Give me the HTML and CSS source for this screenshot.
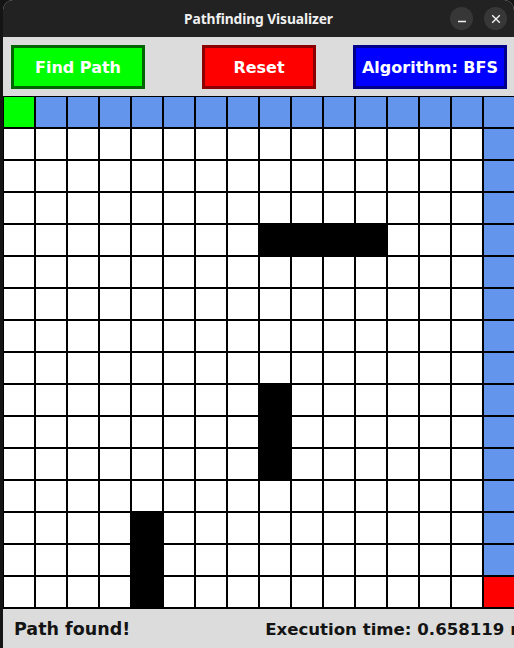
FILE: index.html
```html
<!DOCTYPE html>
<html>
<head>
<meta charset="utf-8">
<title>Pathfinding Visualizer</title>
<link rel="stylesheet" href="styles.css">
</head>
<body>
<div class="window">
  <header class="titlebar">
    <span class="title">Pathfinding Visualizer</span>
    <div class="controls">
      <span class="ctl"><svg width="10" height="10" viewBox="0 0 10 10"><path d="M1 7.5h8" stroke="#f2f2f2" stroke-width="1.4"/></svg></span>
      <span class="ctl"><svg width="10" height="10" viewBox="0 0 10 10"><path d="M1.2 1.2l7.6 7.6M8.8 1.2l-7.6 7.6" stroke="#f2f2f2" stroke-width="1.4"/></svg></span>
    </div>
  </header>
  <div class="panel">
    <button class="btn btn-find">Find Path</button>
    <button class="btn btn-reset">Reset</button>
    <button class="btn btn-algo">Algorithm: BFS</button>
  </div>
  <div class="grid">
    <div class="c s"></div><div class="c v"></div><div class="c v"></div><div class="c v"></div><div class="c v"></div><div class="c v"></div><div class="c v"></div><div class="c v"></div><div class="c v"></div><div class="c v"></div><div class="c v"></div><div class="c v"></div><div class="c v"></div><div class="c v"></div><div class="c v"></div><div class="c v"></div>
    <div class="c"></div><div class="c"></div><div class="c"></div><div class="c"></div><div class="c"></div><div class="c"></div><div class="c"></div><div class="c"></div><div class="c"></div><div class="c"></div><div class="c"></div><div class="c"></div><div class="c"></div><div class="c"></div><div class="c"></div><div class="c v"></div>
    <div class="c"></div><div class="c"></div><div class="c"></div><div class="c"></div><div class="c"></div><div class="c"></div><div class="c"></div><div class="c"></div><div class="c"></div><div class="c"></div><div class="c"></div><div class="c"></div><div class="c"></div><div class="c"></div><div class="c"></div><div class="c v"></div>
    <div class="c"></div><div class="c"></div><div class="c"></div><div class="c"></div><div class="c"></div><div class="c"></div><div class="c"></div><div class="c"></div><div class="c"></div><div class="c"></div><div class="c"></div><div class="c"></div><div class="c"></div><div class="c"></div><div class="c"></div><div class="c v"></div>
    <div class="c"></div><div class="c"></div><div class="c"></div><div class="c"></div><div class="c"></div><div class="c"></div><div class="c"></div><div class="c"></div><div class="c w"></div><div class="c w"></div><div class="c w"></div><div class="c w"></div><div class="c"></div><div class="c"></div><div class="c"></div><div class="c v"></div>
    <div class="c"></div><div class="c"></div><div class="c"></div><div class="c"></div><div class="c"></div><div class="c"></div><div class="c"></div><div class="c"></div><div class="c"></div><div class="c"></div><div class="c"></div><div class="c"></div><div class="c"></div><div class="c"></div><div class="c"></div><div class="c v"></div>
    <div class="c"></div><div class="c"></div><div class="c"></div><div class="c"></div><div class="c"></div><div class="c"></div><div class="c"></div><div class="c"></div><div class="c"></div><div class="c"></div><div class="c"></div><div class="c"></div><div class="c"></div><div class="c"></div><div class="c"></div><div class="c v"></div>
    <div class="c"></div><div class="c"></div><div class="c"></div><div class="c"></div><div class="c"></div><div class="c"></div><div class="c"></div><div class="c"></div><div class="c"></div><div class="c"></div><div class="c"></div><div class="c"></div><div class="c"></div><div class="c"></div><div class="c"></div><div class="c v"></div>
    <div class="c"></div><div class="c"></div><div class="c"></div><div class="c"></div><div class="c"></div><div class="c"></div><div class="c"></div><div class="c"></div><div class="c"></div><div class="c"></div><div class="c"></div><div class="c"></div><div class="c"></div><div class="c"></div><div class="c"></div><div class="c v"></div>
    <div class="c"></div><div class="c"></div><div class="c"></div><div class="c"></div><div class="c"></div><div class="c"></div><div class="c"></div><div class="c"></div><div class="c w"></div><div class="c"></div><div class="c"></div><div class="c"></div><div class="c"></div><div class="c"></div><div class="c"></div><div class="c v"></div>
    <div class="c"></div><div class="c"></div><div class="c"></div><div class="c"></div><div class="c"></div><div class="c"></div><div class="c"></div><div class="c"></div><div class="c w"></div><div class="c"></div><div class="c"></div><div class="c"></div><div class="c"></div><div class="c"></div><div class="c"></div><div class="c v"></div>
    <div class="c"></div><div class="c"></div><div class="c"></div><div class="c"></div><div class="c"></div><div class="c"></div><div class="c"></div><div class="c"></div><div class="c w"></div><div class="c"></div><div class="c"></div><div class="c"></div><div class="c"></div><div class="c"></div><div class="c"></div><div class="c v"></div>
    <div class="c"></div><div class="c"></div><div class="c"></div><div class="c"></div><div class="c"></div><div class="c"></div><div class="c"></div><div class="c"></div><div class="c"></div><div class="c"></div><div class="c"></div><div class="c"></div><div class="c"></div><div class="c"></div><div class="c"></div><div class="c v"></div>
    <div class="c"></div><div class="c"></div><div class="c"></div><div class="c"></div><div class="c w"></div><div class="c"></div><div class="c"></div><div class="c"></div><div class="c"></div><div class="c"></div><div class="c"></div><div class="c"></div><div class="c"></div><div class="c"></div><div class="c"></div><div class="c v"></div>
    <div class="c"></div><div class="c"></div><div class="c"></div><div class="c"></div><div class="c w"></div><div class="c"></div><div class="c"></div><div class="c"></div><div class="c"></div><div class="c"></div><div class="c"></div><div class="c"></div><div class="c"></div><div class="c"></div><div class="c"></div><div class="c v"></div>
    <div class="c"></div><div class="c"></div><div class="c"></div><div class="c"></div><div class="c w"></div><div class="c"></div><div class="c"></div><div class="c"></div><div class="c"></div><div class="c"></div><div class="c"></div><div class="c"></div><div class="c"></div><div class="c"></div><div class="c"></div><div class="c e"></div>
  </div>
  <footer class="status">
    <span class="status-left">Path found!</span>
    <span class="status-right">Execution time: 0.658119 ms</span>
  </footer>
</div>
</body>
</html>
```
FILE: styles.css
```css
html, body {
  margin: 0;
  padding: 0;
  width: 514px;
  height: 648px;
  overflow: hidden;
  background: #141414;
}
.window {
  margin-left: 3px;
  width: 511px;
  height: 648px;
  background: #dcdcdc;
  border-radius: 10px 10px 0 0;
  overflow: hidden;
  display: flex;
  flex-direction: column;
}
.titlebar {
  height: 37px;
  flex: none;
  background: #222222;
  position: relative;
  display: flex;
  align-items: center;
  justify-content: center;
}
.title {
  font-family: "Noto Sans", sans-serif;
  font-weight: 700;
  font-size: 13.8px;
  color: #f0f0f0;
  letter-spacing: -0.1px;
}
.controls {
  position: absolute;
  right: 7px;
  top: 7px;
  display: flex;
  gap: 11px;
}
.ctl {
  width: 23px;
  height: 23px;
  border-radius: 50%;
  background: #373737;
  display: flex;
  align-items: center;
  justify-content: center;
}
.panel {
  height: 59px;
  flex: none;
  display: flex;
  align-items: flex-start;
  padding: 8px 0 0 8px;
  box-sizing: border-box;
}
.btn {
  height: 44px;
  box-sizing: border-box;
  border: 3px solid;
  font-family: "DejaVu Sans", sans-serif;
  font-weight: 700;
  font-size: 16px;
  color: #ffffff;
  padding: 0;
  display: flex;
  align-items: center;
  justify-content: center;
}
.btn-find {
  width: 134px;
  background: #00ff00;
  border-color: #006400;
}
.btn-reset {
  width: 114px;
  margin-left: 57px;
  background: #ff0000;
  border-color: #8b0000;
}
.btn-algo {
  width: 154px;
  margin-left: 37px;
  background: #0000ff;
  border-color: #00008b;
}
.grid {
  flex: none;
  width: 513px;
  background: #000;
  display: grid;
  grid-template-columns: repeat(16, 30px);
  grid-auto-rows: 30px;
  gap: 2px;
  padding: 1px 0 2px 1px;
}
.c { background: #ffffff; }
.c.s { background: #00ff00; }
.c.v { background: #6495ed; }
.c.w { background: #000000; }
.c.e { background: #ff0000; }
.status {
  flex: 1;
  display: flex;
  align-items: flex-start;
  padding-top: 10px;
  font-family: "DejaVu Sans", sans-serif;
  font-weight: 700;
  font-size: 17.5px;
  color: #141414;
  white-space: nowrap;
}
.status-left {
  margin-left: 11px;
}
.status-right {
  margin-left: 135px;
  font-size: 16.6px;
  padding-top: 1px;
}
```
